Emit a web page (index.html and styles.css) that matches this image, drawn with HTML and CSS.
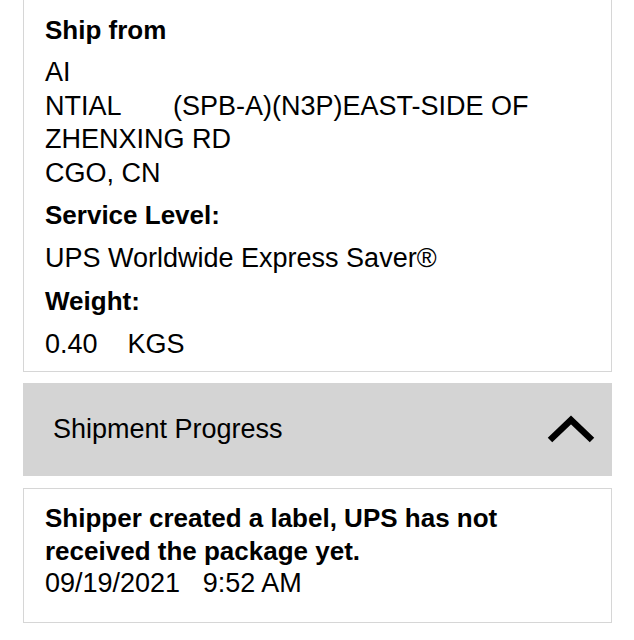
FILE: index.html
```html
<!DOCTYPE html>
<html lang="en">
<head>
<meta charset="utf-8">
<title>Shipment Details</title>
<link rel="stylesheet" href="styles.css">
</head>
<body>
<main class="page">
  <section class="card card--continued">
    <h3 class="label">Ship from</h3>
    <p class="address">AI
NTIAL       (SPB-A)(N3P)EAST-SIDE OF
ZHENXING RD
CGO, CN</p>
    <h3 class="label label--spaced">Service Level:</h3>
    <p class="value">UPS Worldwide Express Saver®</p>
    <h3 class="label label--spaced">Weight:</h3>
    <p class="value">0.40    KGS</p>
  </section>

  <button class="accordion" type="button">
    <span class="accordion__title">Shipment Progress</span>
    <svg class="accordion__icon" width="50" height="30" viewBox="0 0 50 30" aria-hidden="true">
      <path d="M4 25 L25 5 L46 25" fill="none" stroke="#000" stroke-width="6.5" stroke-linecap="butt" stroke-linejoin="miter"/>
    </svg>
  </button>

  <section class="card card--event">
    <p class="event__title">Shipper created a label, UPS has not received the package yet.</p>
    <p class="event__date">09/19/2021   9:52 AM</p>
  </section>
</main>
</body>
</html>
```

FILE: styles.css
```css
* {
  box-sizing: border-box;
}

html, body {
  margin: 0;
  padding: 0;
  background: #ffffff;
}

body {
  font-family: "Liberation Sans", Arial, sans-serif;
  color: #000;
  font-size: 27px;
}

.page {
  padding: 0 22px 0 23px;
  display: flex;
  flex-direction: column;
}

.card {
  background: #fff;
  border: 1px solid #d6d6d6;
  padding: 0 21px;
}

.card--continued {
  border-top: 0;
  padding-top: 14px;
  padding-bottom: 10px;
}

.label {
  margin: 0;
  font-weight: bold;
  font-size: 26px;
  line-height: 33px;
}

.label--spaced {
  margin-top: 9px;
}

.address,
.value {
  margin: 0;
  white-space: pre-wrap;
  line-height: 33.5px;
}

.address {
  margin-top: 9px;
}

.value {
  margin-top: 10px;
}

.accordion {
  margin-top: 11px;
  height: 93px;
  width: 100%;
  border: 0;
  background: #d4d4d4;
  display: flex;
  align-items: center;
  justify-content: space-between;
  padding: 0 16px 0 30px;
  font: inherit;
  color: #000;
  text-align: left;
}

.accordion__title {
  font-size: 27px;
}

.accordion__icon {
  margin-top: 1px;
}

.card--event {
  margin-top: 12px;
  padding-top: 13px;
  padding-bottom: 23px;
}

.event__title {
  margin: 0;
  font-weight: bold;
  font-size: 26px;
  line-height: 32.5px;
}

.event__date {
  margin: 0;
  white-space: pre-wrap;
  line-height: 32px;
}
```
